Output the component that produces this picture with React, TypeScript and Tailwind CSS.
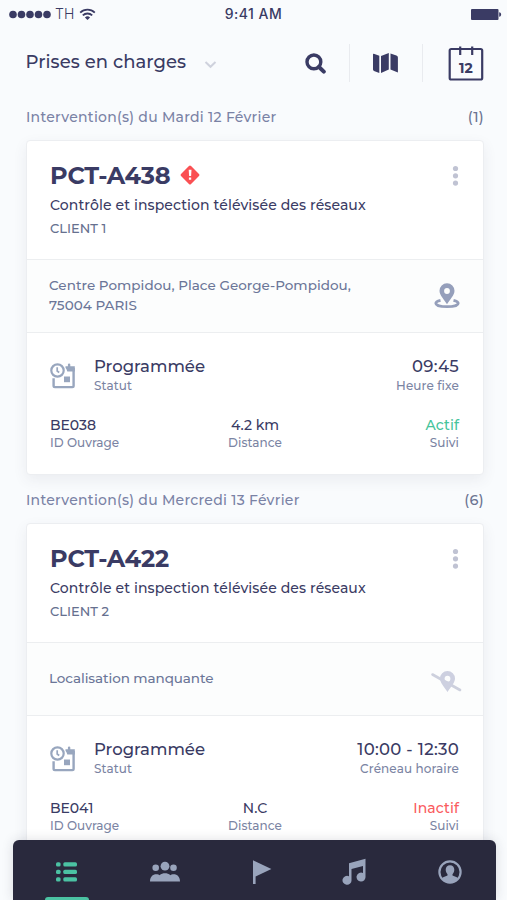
import { useState } from "react"
import type { ReactNode } from "react"
import clsx from "clsx"

type Intervention = {
  code: string
  alert: boolean
  title: string
  client: string
  address: string[]
  located: boolean
  time: string
  timeLabel: string
  ouvrage: string
  distance: string
  active: boolean
}

type Section = {
  label: string
  count: number
  item: Intervention
}

const sections: Section[] = [
  {
    label: "Intervention(s) du Mardi 12 Février",
    count: 1,
    item: {
      code: "PCT-A438",
      alert: true,
      title: "Contrôle et inspection télévisée des réseaux",
      client: "CLIENT 1",
      address: ["Centre Pompidou, Place George-Pompidou,", "75004 PARIS"],
      located: true,
      time: "09:45",
      timeLabel: "Heure fixe",
      ouvrage: "BE038",
      distance: "4.2 km",
      active: true,
    },
  },
  {
    label: "Intervention(s) du Mercredi 13 Février",
    count: 6,
    item: {
      code: "PCT-A422",
      alert: false,
      title: "Contrôle et inspection télévisée des réseaux",
      client: "CLIENT 2",
      address: ["Localisation manquante"],
      located: false,
      time: "10:00 - 12:30",
      timeLabel: "Créneau horaire",
      ouvrage: "BE041",
      distance: "N.C",
      active: false,
    },
  },
]

function StatusBar() {
  return (
    <div className="grid h-7 grid-cols-3 items-center pl-[9px] pr-[5px] font-['Inter',sans-serif] text-[#3a3b64]">
      <div className="flex items-center">
        <svg width="42" height="9" viewBox="0 0 42 9" fill="currentColor">
          {[4, 12.5, 21, 29.5, 38].map((x) => (
            <circle key={x} cx={x} cy="4.5" r="3.8" />
          ))}
        </svg>
        <span className="ml-1 text-[14px] font-light leading-5">TH</span>
        <svg className="ml-[5px]" width="17" height="13" viewBox="0 0 17 13" fill="none" stroke="currentColor" strokeWidth="1.8">
          <path d="M1.2 4.6a10.5 10.5 0 0 1 14.6 0" />
          <path d="M3.8 7.4a6.8 6.8 0 0 1 9.4 0" />
          <path d="M8.5 12 5.9 9.4a3.8 3.8 0 0 1 5.2 0z" fill="currentColor" stroke="none" />
        </svg>
      </div>
      <div className="whitespace-nowrap pr-1 text-center text-[14px] font-medium leading-5 tracking-[0.5px]">9:41 AM</div>
      <svg className="justify-self-end" width="32" height="13" viewBox="0 0 32 13" fill="currentColor">
        <rect x="1" y="1" width="27.5" height="11" rx="1" />
        <path d="M29.2 4.2c2.6.4 2.6 4.2 0 4.6z" />
      </svg>
    </div>
  )
}

function Header() {
  return (
    <header className="flex h-[70px] items-center pl-[25.5px] pr-[22px] text-[#3a3b64]">
      <h1 className="w-[161.5px] whitespace-nowrap pb-0.5 text-[18px] font-medium leading-6 tracking-[0.05px]">Prises en charges</h1>
      <svg className="ml-[17px] mt-0.5" width="13" height="9" viewBox="0 0 13 9" fill="none" stroke="#cfd2dd" strokeWidth="2">
        <path d="M1.5 2 6.5 6.8 11.5 2" />
      </svg>
      <svg className="ml-[88px]" width="21" height="21" viewBox="0 0 21 21" fill="none" stroke="currentColor">
        <circle cx="8.9" cy="8.9" r="6.9" strokeWidth="3.4" />
        <path d="m14 14 4.8 4.6" strokeWidth="4" strokeLinecap="round" />
      </svg>
      <div className="ml-[23px] h-[38px] w-px bg-[#e9ebef]" />
      <svg className="ml-[22px]" width="27" height="22" viewBox="0 0 27 22" fill="currentColor">
        <path d="M1 2.6q0-1.200.8-.9l5.500 2v17.200L2 18.900a1.400 1.400 0 0 1-1-1.300z" />
        <path d="M9 3.900 16.800 1v16.600L9 20.900z" />
        <path d="m18.500 1.600 5.900 2q1.500.5 1.500 1.800v15l-7.400-2.900z" />
      </svg>
      <div className="ml-[23px] h-[38px] w-px bg-[#e9ebef]" />
      <button className="relative ml-[26px] h-9 w-9">
        <svg className="-ml-px" width="36" height="36" viewBox="0 0 36 36" fill="none" stroke="currentColor" strokeWidth="2.2">
          <rect x="1.7" y="4" width="32.5" height="30.5" rx="1.6" />
          <path d="M12.2 1.4v8.5M24.2 1.4v8.5" />
        </svg>
        <span className="absolute inset-x-0 top-[15px] pr-0.5 text-center text-[14px] font-bold leading-4 tracking-[0.2px]">12</span>
      </button>
    </header>
  )
}

function PinIcon({ located }: { located: boolean }) {
  if (!located) {
    return (
      <svg className="-mr-0.5 mt-[5px]" width="32" height="24" viewBox="0 0 32 24">
        <path d="M2.5 4.5 30 20" stroke="#cdd0dd" strokeWidth="2.6" strokeLinecap="round" />
        <path
          fillRule="evenodd"
          fill="#cdd0e0"
          d="M17.5 1a7.5 7.5 0 0 1 7.5 7.6c0 4-4 8.4-7.5 13.4-3.5-5-7.5-9.4-7.5-13.4A7.5 7.5 0 0 1 17.500 1zm0 4.800a2.900 2.900 0 1 0 0 5.800 2.900 2.900 0 0 0 0-5.800z"
        />
      </svg>
    )
  }
  return (
    <svg width="26" height="26" viewBox="0 0 26 26">
      <path
        fillRule="evenodd"
        fill="#959fbb"
        d="M13 .3a7.500 7.500 0 0 1 7.500 7.500c0 4.400-4.500 8.700-7.500 13.400-3-4.700-7.500-9-7.500-13.400A7.500 7.500 0 0 1 13 .3zm0 4.800a2.900 2.900 0 1 0 0 5.800 2.900 2.900 0 0 0 0-5.800z"
      />
      <path
        d="M6.500 17.300C3.500 18 1.800 18.900 1.800 20.200c0 2.100 5 3.500 11.200 3.500s11.200-1.400 11.200-3.500c0-1.300-1.700-2.200-4.700-2.900"
        fill="none"
        stroke="#959fbb"
        strokeWidth="2.800"
      />
    </svg>
  )
}

function ScheduleIcon() {
  return (
    <svg width="26" height="26" viewBox="0 0 26 26" fill="none" stroke="#98a6be">
      <circle cx="7.5" cy="7.5" r="6.2" strokeWidth="2.2" />
      <path d="M7.2 4.2V8l2 1.500" strokeWidth="1.7" />
      <path d="M3.600 15.300v7.500q0 1.300 1.300 1.300h17.400q1.300 0 1.300-1.300V5" strokeWidth="2.4" />
      <path d="M15.500 3.200h2.400V1.400q0-1 1.200-1t1.200 1v1.800h4.500v5.300h-7.500q-.5-2-1.800-3.800z" fill="#98a6be" stroke="none" />
      <path d="M14 13.500h6v5.700h-6z" fill="#98a6be" stroke="none" />
    </svg>
  )
}

function Card({ item }: { item: Intervention }) {
  return (
    <article className="h-[335px] rounded border border-[#eceef1] bg-white text-[#3a3b64] shadow-[0_5px_14px_rgba(60,64,90,0.08)]">
      <div className="flex h-[118px] justify-between px-6 pl-[23px] pt-[21px]">
        <div>
          <div className="flex items-center">
            <h2 className="w-[121px] whitespace-nowrap text-[24px] font-bold leading-7 tracking-[-0.15px]">{item.code}</h2>
            {item.alert && (
              <svg className="-mt-0.5 ml-2" width="22" height="22" viewBox="0 0 22 22">
                <rect x="3.9" y="3.9" width="14.2" height="14.2" rx="1.5" fill="#fa5053" transform="rotate(45 11 11)" />
                <path d="M9.700 5.700h2.800l-.4 6.300h-2zM9.900 13.400h2.300v2.300H9.900z" fill="#fff" />
              </svg>
            )}
          </div>
          <p className="mt-[5px] whitespace-nowrap text-[14px] font-medium leading-5 tracking-[0.1px]">{item.title}</p>
          <p className="mt-[5px] text-[13px] font-medium leading-[17px] text-[#66708f]">{item.client}</p>
        </div>
        <svg className="mt-[3px]" width="7" height="22" viewBox="0 0 7 22" fill="#c0c3d3">
          <circle cx="3.5" cy="3.5" r="2.6" />
          <circle cx="3.5" cy="10.8" r="2.6" />
          <circle cx="3.5" cy="18.1" r="2.6" />
        </svg>
      </div>

      <div className="flex h-[74px] items-center justify-between border-y border-[#eceef0] bg-[#fcfdfd] pl-[22px] pr-[23px]">
        <div
          className={clsx(
            "pb-0.5 text-[13.5px] font-medium leading-5 text-[#6b7698]",
            item.located ? "tracking-[0.03px]" : "tracking-[-0.08px]"
          )}
        >
          {item.address.map((line) => (
            <p key={line} className="whitespace-nowrap">{line}</p>
          ))}
        </div>
        <PinIcon located={item.located} />
      </div>

      <div className="pl-[23px] pr-6 pt-[22px]">
        <div className="flex">
          <div className="w-[44px] pt-2">
            <ScheduleIcon />
          </div>
          <div className="flex-1">
            <p className="text-[16.5px] font-medium leading-[22px]">Programmée</p>
            <p className="mt-px text-[12px] font-medium leading-4 tracking-[0.1px] text-[#7b84a3]">Statut</p>
          </div>
          <div className="text-right">
            <p className="text-[16.5px] font-medium leading-[22px] tracking-[0.3px]">{item.time}</p>
            <p className="mt-px text-[12px] font-medium leading-4 tracking-[0.1px] text-[#7b84a3]">{item.timeLabel}</p>
          </div>
        </div>
        <div className="mt-[21px] grid grid-cols-3 text-[14px] font-medium leading-5">
          <div>
            <p>{item.ouvrage}</p>
            <p className="text-[12px] leading-4 tracking-[0.02px] text-[#7b84a3]">ID Ouvrage</p>
          </div>
          <div className="pl-px text-center">
            <p>{item.distance}</p>
            <p className="text-[12px] leading-4 tracking-[0.05px] text-[#7b84a3]">Distance</p>
          </div>
          <div className="text-right">
            <p className={clsx("tracking-[0.1px]", item.active ? "text-[#45c49b]" : "text-[#fa5b5e]")}>
              {item.active ? "Actif" : "Inactif"}
            </p>
            <p className="text-[12px] leading-4 tracking-[0.05px] text-[#7b84a3]">Suivi</p>
          </div>
        </div>
      </div>
    </article>
  )
}

const tabs: { name: string; icon: ReactNode }[] = [
  {
    name: "Liste",
    icon: (
      <svg width="22" height="22" viewBox="0 0 22 22" fill="currentColor">
        {[1.2, 8.7, 16.2].map((y) => (
          <g key={y}>
            <rect x="0" y={y} width="4.6" height="4.3" rx="1.6" />
            <rect x="7.300" y={y} width="13.7" height="4.3" rx="1.6" />
          </g>
        ))}
      </svg>
    ),
  },
  {
    name: "Équipe",
    icon: (
      <svg className="ml-[5px] shrink-0" width="32" height="22" viewBox="0 0 32 22" fill="currentColor">
        <circle cx="6.7" cy="6.800" r="3.3" />
        <circle cx="24.5" cy="6.800" r="3.3" />
        <circle cx="16" cy="5.2" r="4.4" />
        <path d="M1 20.500c0-4.500 2.500-7.200 6.500-7.200 1.300 0 2.400.5 3.100.9 3-2.600 7.800-2.600 10.800 0 .7-.4 1.800-.9 3.100-.9 4 0 6.500 2.700 6.500 7.200z" />
      </svg>
    ),
  },
  {
    name: "Drapeau",
    icon: (
      <svg className="ml-[6px] shrink-0" width="20" height="26" viewBox="0 0 20 26" fill="currentColor">
        <path d="M1 1.200 19.400 10 3.600 17.600V25H1z" />
      </svg>
    ),
  },
  {
    name: "Musique",
    icon: (
      <svg width="24" height="27" viewBox="0 0 24 27" fill="currentColor">
        <path d="M7 5.200 23.500.8v17.700a4.500 4.500 0 1 1-2.500-3.500V7.900L9.500 10.900V22A4.500 4.500 0 1 1 7 18.300z" />
      </svg>
    ),
  },
  {
    name: "Profil",
    icon: (
      <svg width="24" height="24" viewBox="0 0 24 24" fill="currentColor">
        <circle cx="12" cy="12" r="10.6" fill="none" stroke="currentColor" strokeWidth="2.2" />
        <path d="M12 5.200c2.700 0 4.300 1.900 4.300 4.600 0 1.800-.8 3.400-1.800 4.400v1.300l4.300 1.800 1.200 1.200A10 10 0 0 1 4 18.500l1.200-1.200 4.300-1.800v-1.300c-1-1-1.800-2.600-1.800-4.400 0-2.700 1.600-4.600 4.300-4.600z" />
      </svg>
    ),
  },
]

function TabBar() {
  const [current, setCurrent] = useState("Liste")

  return (
    <nav className="absolute bottom-0 left-[13px] right-[11px] flex h-[60px] justify-between rounded-t-md bg-[#29293d] pl-8 pr-6 shadow-[0_0_12px_rgba(41,41,61,0.15)]">
      {tabs.map((tab) => (
        <button
          key={tab.name}
          aria-label={tab.name}
          onClick={() => setCurrent(tab.name)}
          className={clsx(
            "relative flex h-full w-11 items-center justify-center pb-px pt-1",
            current === tab.name ? "text-[#4bc2a3]" : "text-[#99a4bc]"
          )}
        >
          {tab.icon}
          {current === tab.name && <span className="absolute inset-x-0 bottom-0 h-[3px] rounded-t-sm bg-[#4bc2a3]" />}
        </button>
      ))}
    </nav>
  )
}

export default function App() {
  return (
    <div className="relative h-[900px] w-[507px] overflow-hidden bg-[#f9fbfd] font-['Montserrat','Inter',sans-serif]">
      <StatusBar />
      <Header />
      <main className="pl-[26px] pr-[23px]">
        {sections.map((section) => (
          <section key={section.label} className="mb-1.5">
            <div className="flex h-[42px] items-center justify-between pb-[5px] text-[14px] font-medium leading-5 text-[#7a82a5]">
              <h3 className="whitespace-nowrap tracking-[0.27px]">{section.label}</h3>
              <span className="text-[14.5px] tracking-[0.3px] text-[#6b7492]">({section.count})</span>
            </div>
            <Card item={section.item} />
          </section>
        ))}
      </main>
      <TabBar />
    </div>
  )
}
